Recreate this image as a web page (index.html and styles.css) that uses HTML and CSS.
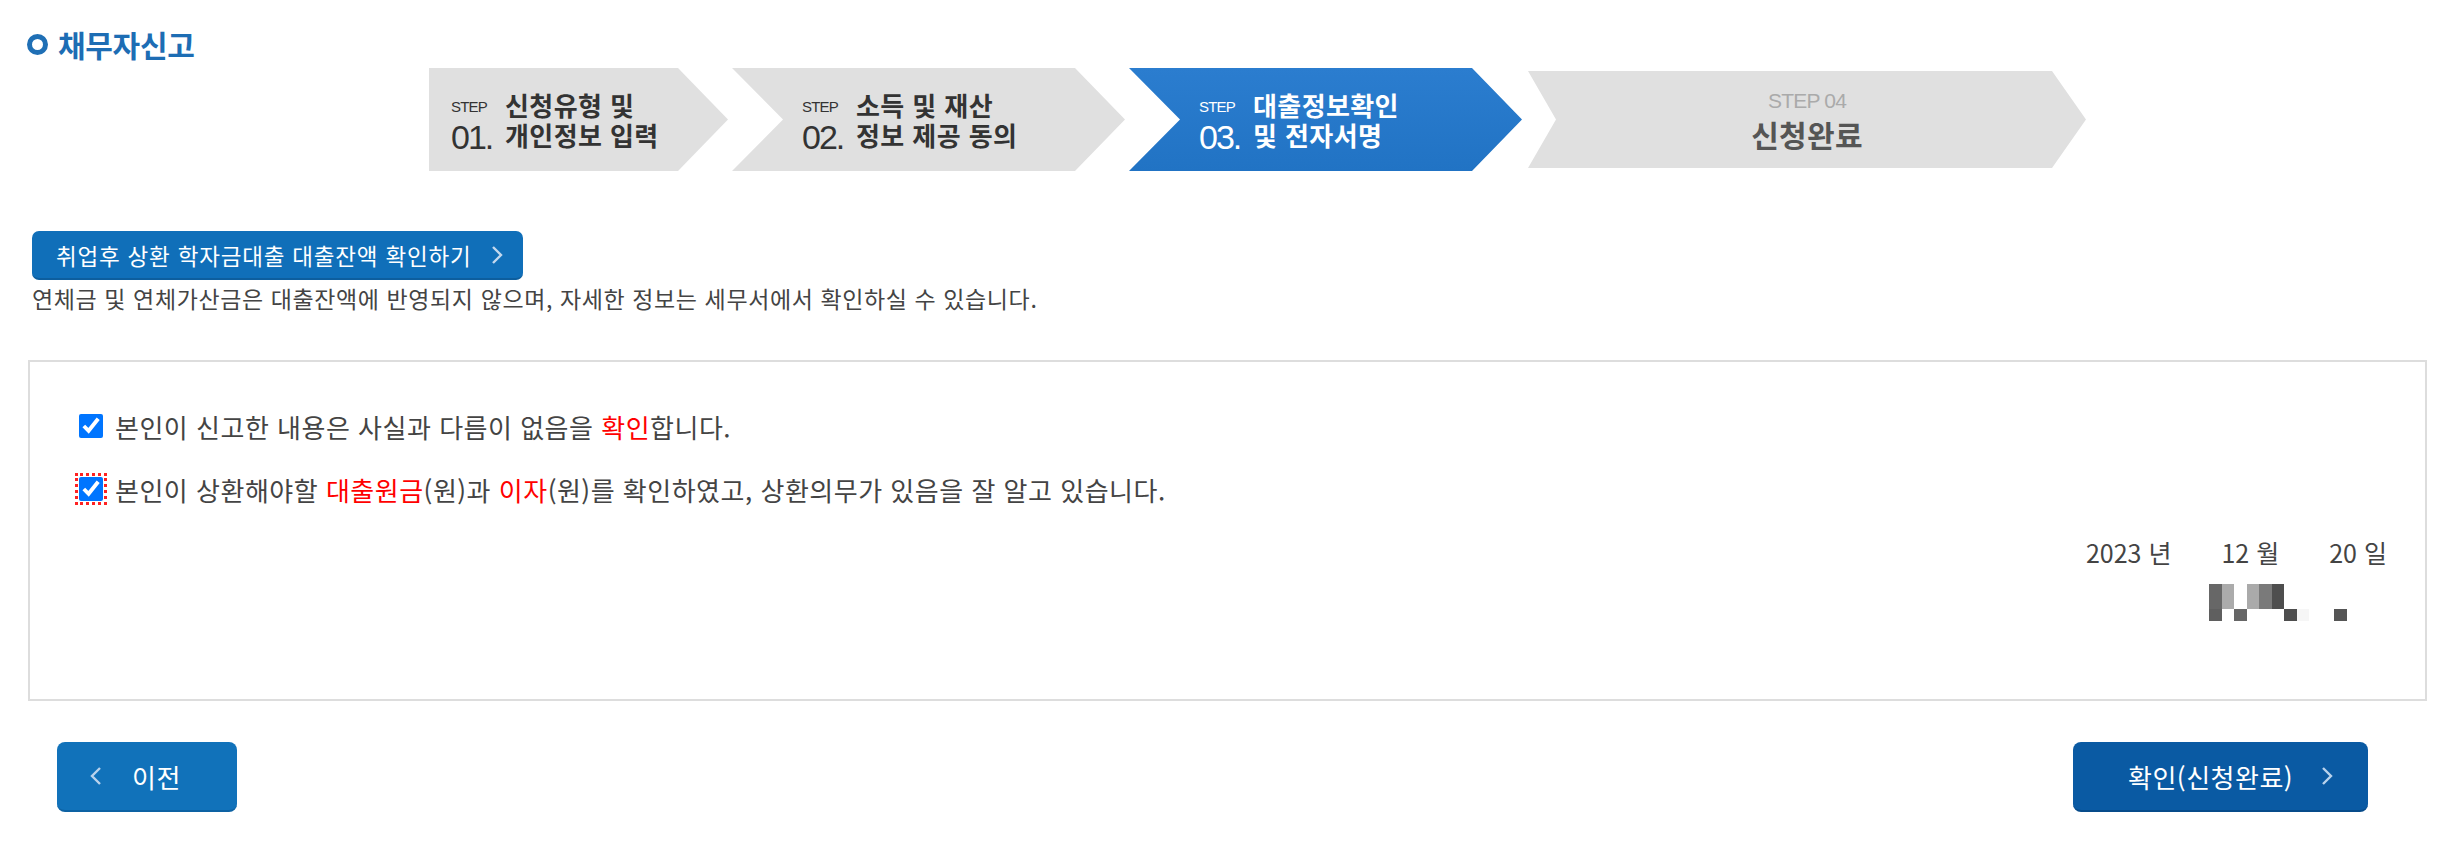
FILE: index.html
```html
<!DOCTYPE html>
<html lang="ko">
<head>
  <meta charset="UTF-8" />
  <title>채무자신고</title>
  <link rel="stylesheet" href="styles.css">
</head>
<body>
  <div class="page">
    <h2 class="title"><span class="dot"></span>채무자신고</h2>

    <ol class="steps">
      <li class="step step-first">
        <div class="step-in">
          <span class="step-lbl">STEP</span><span class="step-txt">신청유형 및</span>
          <span class="step-no">01.</span><span class="step-txt">개인정보 입력</span>
        </div>
      </li>
      <li class="step">
        <div class="step-in">
          <span class="step-lbl">STEP</span><span class="step-txt">소득 및 재산</span>
          <span class="step-no">02.</span><span class="step-txt">정보 제공 동의</span>
        </div>
      </li>
      <li class="step step-on">
        <div class="step-in">
          <span class="step-lbl">STEP</span><span class="step-txt">대출정보확인</span>
          <span class="step-no">03.</span><span class="step-txt">및 전자서명</span>
        </div>
      </li>
      <li class="step step-last">
        <span class="step4-lbl">STEP 04</span>
        <span class="step4-txt">신청완료</span>
      </li>
    </ol>

    <a class="loan-btn" href="#"><span>취업후 상환 학자금대출 대출잔액 확인하기</span>
      <svg class="chev" width="12" height="20" viewBox="0 0 12 20"><path d="M2 2 L10 10 L2 18" fill="none" stroke="#c3d8ee" stroke-width="2.4"/></svg>
    </a>
    <p class="note">연체금 및 연체가산금은 대출잔액에 반영되지 않으며, 자세한 정보는 세무서에서 확인하실 수 있습니다.</p>

    <div class="agree-box">
      <label class="agree-row"><input type="checkbox" checked><span>본인이 신고한 내용은 사실과 다름이 없음을 <em>확인</em>합니다.</span></label>
      <label class="agree-row"><input type="checkbox" class="focus" checked><span>본인이 상환해야할 <em>대출원금</em>(원)과 <em>이자</em>(원)를 확인하였고, 상환의무가 있음을 잘 알고 있습니다.</span></label>
      <div class="date-row">
        <span>2023 년</span><span>12 월</span><span>20 일</span>
      </div>
      <div class="sign-row">
        <svg width="140" height="38" viewBox="0 0 140 38">
          <rect x="0" y="0" width="13" height="25" fill="#676767"/>
          <rect x="0" y="25" width="13" height="12" fill="#5f5f5f"/>
          <rect x="13" y="0" width="12" height="25" fill="#ababab"/>
          <rect x="25" y="25" width="13" height="12" fill="#666"/>
          <rect x="38" y="0" width="12" height="25" fill="#aaa"/>
          <rect x="50" y="0" width="13" height="25" fill="#7a7a7a"/>
          <rect x="63" y="0" width="12" height="25" fill="#4e4e4e"/>
          <rect x="75" y="25" width="13" height="12" fill="#4e4e4e"/>
          <rect x="88" y="25" width="12" height="12" fill="#f6f6f6"/>
          <rect x="125" y="25" width="13" height="12" fill="#555"/>
        </svg>
      </div>
    </div>

    <div class="btn-row">
      <a class="btn btn-prev" href="#">
        <svg class="chev" width="12" height="20" viewBox="0 0 12 20"><path d="M10 2 L2 10 L10 18" fill="none" stroke="#b9d2ec" stroke-width="2.4"/></svg>
        <span>이전</span>
      </a>
      <a class="btn btn-ok" href="#">
        <span>확인(신청완료)</span>
        <svg class="chev" width="12" height="20" viewBox="0 0 12 20"><path d="M2 2 L10 10 L2 18" fill="none" stroke="#b9d2ec" stroke-width="2.4"/></svg>
      </a>
    </div>
  </div>
</body>
</html>
```

FILE: styles.css
```css
body { margin: 0; background: #fff; color: #444; font-family: "Noto Sans CJK KR", "Noto Sans", sans-serif; }
.page { padding: 28px 11px 0 28px; }

.title { display: flex; align-items: center; gap: 10px; margin: 0; height: 32px; font-size: 30px; font-weight: bold; color: #1d6db4; letter-spacing: -0.3px; }
.dot { width: 11px; height: 11px; border: 5px solid #1f6fb5; border-radius: 50%; margin-left: -1px; }

.steps { list-style: none; display: flex; gap: 4px; margin: 8px 0 0 401px; padding: 0; height: 103px; }
.step { position: relative; width: 393px; background: #e0e0e0; color: #333;
  clip-path: polygon(0 0, calc(100% - 50px) 0, 100% 50%, calc(100% - 50px) 100%, 0 100%, 51px 50%); }
.step-first { width: 299px; clip-path: polygon(0 0, calc(100% - 50px) 0, 100% 50%, calc(100% - 50px) 100%, 0 100%); }
.step-on { background: linear-gradient(#2b7dcf, #2173c4); color: #fff; }
.step-last { width: 558px; margin: 3px 0 0 2px; height: 97px; display: flex; flex-direction: column; align-items: center; justify-content: center;
  clip-path: polygon(0 0, calc(100% - 34px) 0, 100% 50%, calc(100% - 34px) 100%, 0 100%, 28px 50%); }

.step-in { display: grid; grid-template-columns: 54px auto; grid-auto-rows: 30px; align-items: center; padding: 22px 0 0 22px; }
.step + .step .step-in { padding-left: 70px; }
.step-lbl { font-family: "Liberation Sans", sans-serif; font-size: 15px; line-height: 16px; letter-spacing: -0.8px; align-self: start; margin-top: 9px; }
.step-no { font-family: "Liberation Sans", sans-serif; font-size: 34px; letter-spacing: -2px; line-height: 30px; margin-top: 4px; }
.step-txt { font-size: 26px; font-weight: bold; letter-spacing: 0.4px; line-height: 30px; }
.step4-lbl { font-family: "Liberation Sans", sans-serif; font-size: 21px; color: #aaa; letter-spacing: -0.8px; line-height: 24px; }
.step4-txt { font-size: 30px; font-weight: bold; color: #555; letter-spacing: 0.3px; line-height: 34px; margin-top: 4px; }

.loan-btn { display: inline-flex; align-items: center; gap: 20px; margin: 60px 0 0 4px; height: 49px; padding: 0 20px 0 24px; box-sizing: border-box;
  background: #106fb9; border-radius: 7px; border-bottom: 2px solid #0d5e9e; color: #fff; font-size: 22.5px; letter-spacing: 0.8px; text-decoration: none; }
.note { margin: 4px 0 0 4px; font-size: 23px; line-height: 28px; color: #444; letter-spacing: 0.6px; }

.agree-box { margin-top: 48px; border: 2px solid #dddddd; padding: 49px 38px 77px 47px; }
.agree-row { display: flex; align-items: center; gap: 12px; height: 30px; font-size: 26px; color: #444; letter-spacing: 0.5px; }
.agree-row + .agree-row { margin-top: 33px; }
.agree-row input { width: 24px; height: 24px; margin: 0 0 0 2px; }
.agree-row input.focus { outline: 3px dotted #f22; outline-offset: 1px; }
.agree-row em { font-style: normal; color: #f00; }
.date-row { display: flex; justify-content: flex-end; gap: 50px; margin-top: 33px; height: 30px; font-size: 25px; color: #444; line-height: 30px; }
.sign-row { display: flex; justify-content: flex-end; margin: 17px 38px 0 0; height: 38px; }

.btn-row { display: flex; justify-content: space-between; padding: 41px 59px 0 29px; }
.btn { display: flex; align-items: center; height: 70px; box-sizing: border-box; border-radius: 8px; color: #fff; font-size: 26px; letter-spacing: 0.5px; text-decoration: none; }
.btn-prev { width: 180px; gap: 30px; padding-left: 33px; background: #1172ba; border-bottom: 2px solid #0d62a3; }
.btn-ok { width: 295px; gap: 28px; padding-left: 55px; background: #0a5aa3; border-bottom: 2px solid #074b8a; }
```
